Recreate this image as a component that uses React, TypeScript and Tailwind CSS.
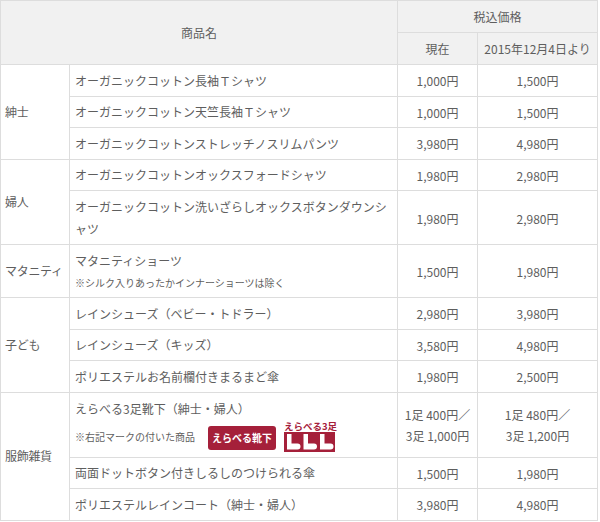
import React from 'react';

type Item = {
  name: React.ReactNode;
  now: React.ReactNode;
  next: React.ReactNode;
  tall?: boolean;
};

type Group = {
  label: string;
  items: Item[];
};

const groups: Group[] = [
  {
    label: '紳士',
    items: [
      { name: 'オーガニックコットン長袖Ｔシャツ', now: '1,000円', next: '1,500円' },
      { name: 'オーガニックコットン天竺長袖Ｔシャツ', now: '1,000円', next: '1,500円' },
      { name: 'オーガニックコットンストレッチノスリムパンツ', now: '3,980円', next: '4,980円' },
    ],
  },
  {
    label: '婦人',
    items: [
      { name: 'オーガニックコットンオックスフォードシャツ', now: '1,980円', next: '2,980円' },
      {
        name: (
          <>
            オーガニックコットン洗いざらしオックスボタンダウンシ
            <br />
            ャツ
          </>
        ),
        now: '1,980円',
        next: '2,980円',
        tall: true,
      },
    ],
  },
  {
    label: 'マタニティ',
    items: [
      {
        name: (
          <>
            <div>マタニティショーツ</div>
            <div className="text-[10px] leading-[21px]">※シルク入りあったかインナーショーツは除く</div>
          </>
        ),
        now: '1,500円',
        next: '1,980円',
        tall: true,
      },
    ],
  },
  {
    label: '子ども',
    items: [
      { name: 'レインシューズ（ベビー・トドラー）', now: '2,980円', next: '3,980円' },
      { name: 'レインシューズ（キッズ）', now: '3,580円', next: '4,980円' },
      { name: 'ポリエステルお名前欄付きまるまど傘', now: '1,980円', next: '2,500円' },
    ],
  },
  {
    label: '服飾雑貨',
    items: [
      {
        name: (
          <>
            <div>えらべる3足靴下（紳士・婦人）</div>
            <div className="flex h-[33px] items-center">
              <span className="text-[10px] leading-[21px]">※右記マークの付いた商品</span>
              <span className="ml-[13px] mt-[4px] flex h-[24px] w-[68px] items-center justify-center rounded-[3px] bg-[#a5203a] text-[10px] font-bold leading-none text-white">
                えらべる靴下
              </span>
              <span className="ml-[8px] flex flex-col items-start">
                <span className="text-[9.5px] font-bold leading-[11px] text-[#a5203a]">えらべる3足</span>
                <ThreeSocks />
              </span>
            </div>
          </>
        ),
        now: (
          <>
            1足 400円／
            <br />
            3足 1,000円
          </>
        ),
        next: (
          <>
            1足 480円／
            <br />
            3足 1,200円
          </>
        ),
        tall: true,
      },
      { name: '両面ドットボタン付きしるしのつけられる傘', now: '1,500円', next: '1,980円' },
      { name: 'ポリエステルレインコート（紳士・婦人）', now: '3,980円', next: '4,980円' },
    ],
  },
];

function ThreeSocks() {
  const sock = (x: number) =>
    `M${x + 2} 2 h4.5 v9.5 h6 a3 3 0 0 1 0 6 h-10.5 z`;
  return (
    <svg width="51" height="20" viewBox="0 0 51 20">
      <rect x="0" y="0" width="51" height="20" fill="#a5203a" />
      <path d={sock(1)} fill="#fff" />
      <path d={sock(17.5)} fill="#fff" />
      <path d={sock(34)} fill="#fff" />
    </svg>
  );
}

const cell = 'border border-[#dddddd] px-[5px] pt-[5px] pb-[4px] align-middle';
const bodyCell = 'border border-[#dddddd] px-[5px] align-middle';

export default function App() {
  return (
    <div
      className="bg-white text-[12px] leading-[22px] text-[#5e5e5e]"
      style={{ fontFamily: '"Noto Sans CJK JP", "Noto Sans", sans-serif' }}
    >
      <table className="w-[597px] table-fixed border-collapse">
        <colgroup>
          <col className="w-[69px]" />
          <col className="w-[328px]" />
          <col className="w-[80px]" />
          <col className="w-[120px]" />
        </colgroup>
        <thead>
          <tr className="bg-[#f1f1f1]">
            <th rowSpan={2} colSpan={2} className={`${cell} text-center font-normal`}>
              商品名
            </th>
            <th colSpan={2} className={`${cell} text-center font-normal`}>
              税込価格
            </th>
          </tr>
          <tr className="bg-[#f1f1f1]">
            <th className={`${cell} text-center font-normal`}>現在</th>
            <th className={`${cell} whitespace-nowrap px-0 text-center font-normal`}>2015年12月4日より</th>
          </tr>
        </thead>
        <tbody>
          {groups.map((g) =>
            g.items.map((it, i) => {
              const pad = it.tall ? 'pt-[5px] pb-[4px]' : 'pt-[4.5px] pb-[4px]';
              return (
                <tr key={`${g.label}-${i}`}>
                  {i === 0 && (
                    <td
                      rowSpan={g.items.length}
                      className={`${bodyCell} pt-[4px] pb-[4px] whitespace-nowrap pl-[4px] pr-0 text-left tracking-[-0.3px]`}
                    >
                      {g.label}
                    </td>
                  )}
                  <td className={`${bodyCell} ${pad} text-left`}>{it.name}</td>
                  <td className={`${bodyCell} ${pad} text-center leading-[21px]`}>{it.now}</td>
                  <td className={`${bodyCell} ${pad} text-center leading-[21px]`}>{it.next}</td>
                </tr>
              );
            })
          )}
        </tbody>
      </table>
    </div>
  );
}
